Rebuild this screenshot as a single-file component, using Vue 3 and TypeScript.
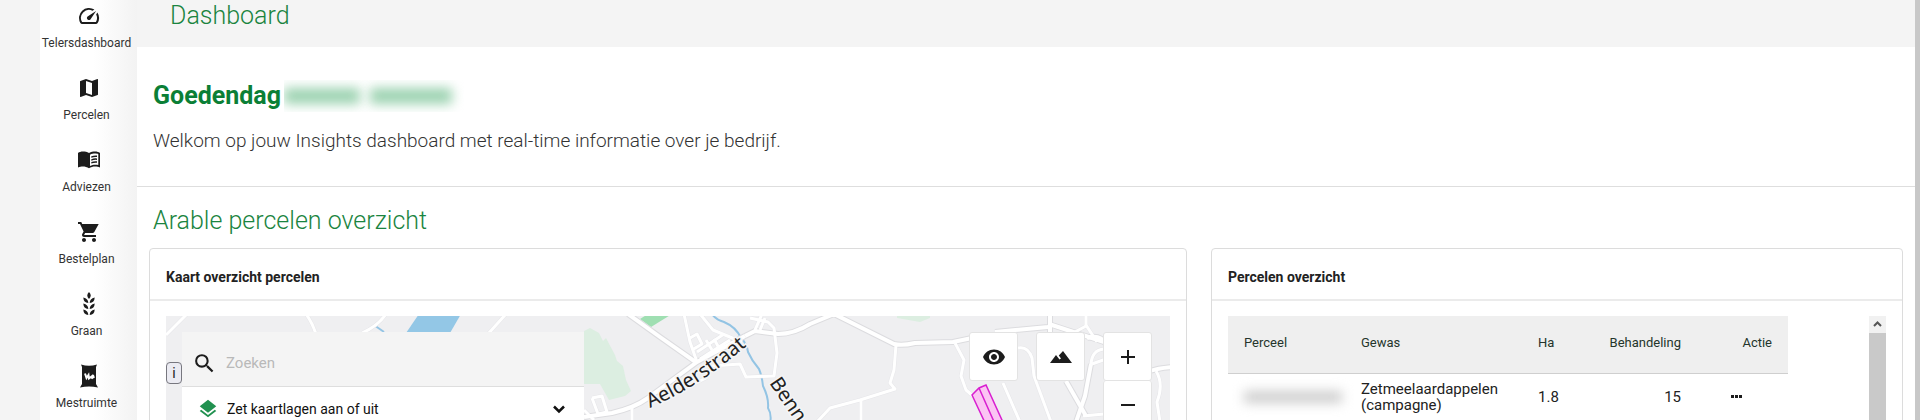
<script setup lang="ts">
import { ref } from 'vue'

type IconName = 'gauge' | 'map' | 'book' | 'cart' | 'grain' | 'bag'

interface NavItem {
  label: string
  icon: IconName
}

interface Parcel {
  crop: string
  hectares: string
  treatment: number
}

const navItems: NavItem[] = [
  { label: 'Telersdashboard', icon: 'gauge' },
  { label: 'Percelen', icon: 'map' },
  { label: 'Adviezen', icon: 'book' },
  { label: 'Bestelplan', icon: 'cart' },
  { label: 'Graan', icon: 'grain' },
  { label: 'Mestruimte', icon: 'bag' },
]

const parcels: Parcel[] = [
  { crop: 'Zetmeelaardappelen (campagne)', hectares: '1.8', treatment: 15 },
]

const minorRoads: string[] = [
  'M166 335L187 314', 'M306 314Q312 322 316 334', 'M362 333Q378 326 386 314', 'M488 334L506 314',
  'M684 314L690 342L697 362', 'M700 314L713 330L742 342', 'M690 338L697 334L702 344L692 350',
  'M697 352L724 334', 'M700 359L730 340', 'M706 340L712 350', 'M714 339L719 348',
  'M755 330L762 314', 'M750 318L768 322L774 328L777 353L774 376L746 377L740 364L712 366L706 378L690 386',
  'M760 330L765 318',
  'M896 345L894 370L890 383L895 389L860 400L830 408L817 422', 'M861 400V422',
  'M632 408V422', 'M592 398L602 396L607 412L598 414L592 398', 'M584 410L594 420',
  'M955 343L964 360L961 376L966 390L973 396', 'M1003 383L1020 422',
  'M1018 348Q1028 346 1032 358L1034 376L1051 422', 'M1086 314V325L1097 342', 'M1075 332L1086 326',
  'M1104 349Q1092 350 1091 364', 'M1092 364L1106 359', 'M1083 416L1104 414',
  'M1156 371Q1164 384 1157 402L1160 422',
]

const mainRoads: string[] = [
  'M628 314L660 337L697 363', 'M584 417L612 413Q634 408 648 398L697 362L745 336',
  'M745 336L755 331L778 334Q794 334 810 324L834 314L868 331L894 344Q902 346 915 343L953 342L972 338',
  'M995 332L1048 327L1052 325L1104 342', 'M1050 314V332', 'M1066 381L1086 416',
  'M1087 338Q1100 334 1106 344', 'M1091 364L1085 396L1076 422', 'M1150 371Q1158 368 1172 367',
]

const search = ref('')
</script>

<template>
  <div class="app">
    <aside class="sidebar">
      <nav class="nav">
        <a v-for="item in navItems" :key="item.label" class="nav-item" href="#">
          <svg class="nav-icon" viewBox="0 0 24 24" aria-hidden="true">
            <g v-if="item.icon === 'gauge'">
              <path d="m20.38 8.57-1.23 1.85a8 8 0 0 1-.22 7.58H5.07A8 8 0 0 1 15.58 6.85l1.85-1.23A10 10 0 0 0 3.35 19a2 2 0 0 0 1.72 1h13.85a2 2 0 0 0 1.74-1 10 10 0 0 0-.27-10.44zm-9.79 6.84a2 2 0 0 0 2.83 0l5.66-8.49-8.49 5.66a2 2 0 0 0 0 2.83z" />
            </g>
            <g v-else-if="item.icon === 'map'">
              <path d="m20.5 3-.16.03L15 5.1 9 3 3.36 4.9c-.21.07-.36.25-.36.48V20.5c0 .28.22.5.5.5l.16-.03L9 18.9l6 2.1 5.64-1.9c.21-.07.36-.25.36-.48V3.5c0-.28-.22-.5-.5-.5zM15 19l-6-2.11V5l6 2.11V19z" />
            </g>
            <g v-else-if="item.icon === 'book'">
              <path fill-rule="evenodd" d="M12 5C10 3.800 8 3.500 6 3.500S2.200 4 1 5V19.600C2.500 18.700 4.300 18.500 6 18.500S10.300 19 12 20.200C13.700 19 16 18.500 18 18.500S21.500 18.700 23 19.600V5C21.800 4 20 3.500 18 3.500S14 3.800 12 5ZM13 6.700C14.500 5.700 16.500 5.500 18 5.500S20.300 5.700 21.300 6V17C18.500 16.300 15.500 16.600 13 18Z" />
              <path d="M14.300 8.300Q17 7.200 20 7.500V9Q17 8.700 14.300 9.800ZM14.300 11.200Q17 10.100 20 10.400V11.900Q17 11.600 14.300 12.700ZM14.300 14.100Q17 13 20 13.300V14.800Q17 14.500 14.300 15.600Z" />
            </g>
            <g v-else-if="item.icon === 'cart'">
              <path d="M7 18c-1.100 0-1.990.9-1.990 2S5.900 22 7 22s2-.9 2-2-.9-2-2-2zM1 2v2h2l3.600 7.590-1.350 2.450c-.16.28-.25.610-.25.960 0 1.100.9 2 2 2h12v-2H7.420c-.14 0-.25-.11-.25-.25l.03-.12.9-1.630h7.450c.75 0 1.410-.41 1.750-1.030L21.700 4H5.210L4.270 2H1zm16 16c-1.100 0-1.990.9-1.990 2s.89 2 1.990 2 2-.9 2-2-.9-2-2-2z" />
            </g>
            <g v-else-if="item.icon === 'grain'">
              <path d="M12 0Q15.500 3.500 12 7Q8.500 3.500 12 0ZM11.300 11Q6.500 10.500 6.300 5.500Q11.300 6.500 11.300 11ZM12.700 11Q17.500 10.500 17.700 5.500Q12.700 6.500 12.700 11ZM11.300 17Q6.500 16.500 6.300 11.500Q11.300 12.500 11.300 17ZM12.700 17Q17.500 16.500 17.700 11.500Q12.700 12.500 12.700 17ZM11.300 23Q6.500 22.500 6.300 17.500Q11.300 18.500 11.300 23ZM12.700 23Q17.500 22.500 17.700 17.500Q12.700 18.500 12.700 23Z" />
            </g>
            <g v-else>
              <path d="M4 .5Q12 3 20 .5L19 3V20L21 23.500Q12 21.500 3 23.500L5 20V3Z" />
              <path class="bag-mark" d="M8 9.500L9.500 14L11.500 11L12 14.500L16.500 11L14.500 14.500L17.500 12.500" />
            </g>
          </svg>
          <span>{{ item.label }}</span>
        </a>
      </nav>
    </aside>

    <main class="main">
      <header class="topbar"><h1>Dashboard</h1></header>

      <section class="welcome">
        <h2 class="greeting">
          Goedendag
          <span class="hidden-name" aria-hidden="true"><i class="first"></i><i class="last"></i></span>
        </h2>
        <p>Welkom op jouw Insights dashboard met real-time informatie over je bedrijf.</p>
      </section>

      <section class="overview">
        <h2 class="overview-title">Arable percelen overzicht</h2>
        <div class="cards">
          <article class="card">
            <h3>Kaart overzicht percelen</h3>
            <div class="card-body">
              <div class="map">
                <svg class="map-canvas" viewBox="166 316 1004 480" preserveAspectRatio="xMinYMin slice" aria-hidden="true">
                  <path class="forest" d="M584 331L590 328L599 333L603 341L606 338L615 355L617 361L623 366L626 380L631 391L625 396L609 400L600 384L584 384Z" />
                  <path class="meadow" d="M640 319L648 314H672L651 327Z" />
                  <path class="forest" d="M897 314H930V318L920 322L897 318Z" />
                  <path class="lake" d="M419 314H461L450 333H406Z" />
                  <path class="stream" d="M374 325L384 332" />
                  <path class="stream" d="M712 314Q716 320 724 322Q736 327 741 338Q747 344 748 352Q752 361 759 369Q762 376 763 386Q769 398 768 408Q772 414 770 424" />
                  <path v-for="d in minorRoads" :key="'c' + d" class="casing" :d="d" />
                  <path v-for="d in mainRoads" :key="'d' + d" class="casing wide" :d="d" />
                  <path v-for="d in minorRoads" :key="d" class="road" :d="d" />
                  <path v-for="d in mainRoads" :key="d" class="road wide" :d="d" />
                  <path class="parcel" d="M972 395L979 388L986 385L1012 442L994 442ZM979 388L1003 442" />
                  <path id="street-a" class="guide" d="M650 408Q708 383 768 327" />
                  <path id="street-b" class="guide" d="M769 383L830 472" />
                  <text class="street"><textPath href="#street-a">Aelderstraat</textPath></text>
                  <text class="street"><textPath href="#street-b">Benn</textPath></text>
                </svg>

                <button class="info" type="button" aria-label="Kaartinformatie">i</button>

                <div class="layers">
                  <label class="search">
                    <svg viewBox="0 0 24 24" aria-hidden="true"><path d="M15.500 14h-.79l-.28-.27A6.470 6.470 0 0 0 16 9.500 6.500 6.500 0 1 0 9.500 16c1.610 0 3.090-.59 4.230-1.570l.27.280v.79l5 4.990L20.490 19l-4.990-5zm-6 0C7.010 14 5 11.990 5 9.500S7.010 5 9.500 5 14 7.010 14 9.500 11.990 14 9.500 14z" /></svg>
                    <input v-model="search" type="text" placeholder="Zoeken" aria-label="Zoeken" />
                  </label>
                  <button class="layer-toggle" type="button">
                    <svg class="layer-icon" viewBox="0 0 24 24" aria-hidden="true"><path d="m11.990 18.540-7.370-5.730L3 14.070l9 7 9-7-1.630-1.270-7.380 5.740zM12 16l7.360-5.730L21 9l-9-7-9 7 1.630 1.270L12 16z" /></svg>
                    <span>Zet kaartlagen aan of uit</span>
                    <svg class="chevron" viewBox="0 0 24 24" aria-hidden="true"><path d="M6 9L12 15L18 9" /></svg>
                  </button>
                </div>

                <div class="map-tools">
                  <button type="button" aria-label="Zichtbaarheid">
                    <svg viewBox="0 0 24 24" aria-hidden="true"><path d="M12 4.500C7 4.500 2.730 7.610 1 12c1.730 4.390 6 7.500 11 7.500s9.270-3.110 11-7.500c-1.730-4.390-6-7.500-11-7.500zM12 17c-2.760 0-5-2.240-5-5s2.240-5 5-5 5 2.240 5 5-2.240 5-5 5zm0-8c-1.660 0-3 1.340-3 3s1.340 3 3 3 3-1.340 3-3-1.340-3-3-3z" /></svg>
                  </button>
                  <button type="button" aria-label="Terrein">
                    <svg viewBox="0 0 24 24" aria-hidden="true"><path d="M1 18L7 10L10.500 14.500L12 13.500L9.800 10.500L14 6L23 18Z" /></svg>
                  </button>
                  <div class="zoom">
                    <button type="button" aria-label="Inzoomen">
                      <svg viewBox="0 0 24 24" aria-hidden="true"><path d="M11 5H13V11H19V13H13V19H11V13H5V11H11Z" /></svg>
                    </button>
                    <button type="button" aria-label="Uitzoomen">
                      <svg viewBox="0 0 24 24" aria-hidden="true"><path d="M5 11H19V13H5Z" /></svg>
                    </button>
                  </div>
                </div>
              </div>
            </div>
          </article>

          <article class="card">
            <h3>Percelen overzicht</h3>
            <div class="card-body list">
              <div class="table-area">
                <table>
                  <thead>
                    <tr>
                      <th class="col-name">Perceel</th>
                      <th class="col-crop">Gewas</th>
                      <th class="col-ha">Ha</th>
                      <th class="col-treat">Behandeling</th>
                      <th class="col-action">Actie</th>
                    </tr>
                  </thead>
                  <tbody>
                    <tr v-for="parcel in parcels" :key="parcel.crop">
                      <td><span class="hidden-parcel" aria-hidden="true"></span></td>
                      <td>{{ parcel.crop }}</td>
                      <td>{{ parcel.hectares }}</td>
                      <td class="col-treat">{{ parcel.treatment }}</td>
                      <td>
                        <button class="more" type="button" aria-label="Acties">
                          <svg viewBox="0 0 12 4" aria-hidden="true"><path d="M0 0H3V3H0ZM4 0H7V3H4ZM8 0H11V3H8Z" /></svg>
                        </button>
                      </td>
                    </tr>
                  </tbody>
                </table>
              </div>
              <div class="scroll-track" aria-hidden="true">
                <svg viewBox="0 0 17 17"><path d="M5 10L8.500 6.500L12 10" /></svg>
                <div class="scroll-thumb"></div>
              </div>
            </div>
          </article>
        </div>
      </section>
    </main>
    <div class="page-scroll" aria-hidden="true"></div>
  </div>
</template>

<style>
body {
  overflow: hidden;
}
</style>

<style scoped>
.app {
  display: flex;
  height: 100vh;
  overflow: hidden;
  box-sizing: border-box;
  padding-left: 40px;
  background: #f4f4f4;
  color: #222;
  font-family: Roboto, "Liberation Sans", sans-serif;
}
.app * {
  box-sizing: border-box;
}
h1, h2, h3, p {
  margin: 0;
}
button, input {
  font: inherit;
  color: inherit;
}
button {
  padding: 0;
  border: 0;
  background: none;
  cursor: pointer;
}
svg {
  display: block;
}
.sidebar {
  flex: 0 0 97px;
  min-width: 0;
  background: linear-gradient(to right, #fff 55%, #f3f3f3);
}
.nav {
  display: flex;
  flex-direction: column;
  padding-top: 4px;
}
.nav-item {
  display: flex;
  flex-direction: column;
  align-items: center;
  gap: 7px;
  height: 72px;
  padding-right: 4px;
  color: #333;
  font-size: 12px;
  line-height: 16px;
  text-decoration: none;
}
.nav-icon {
  width: 24px;
  height: 24px;
  margin-left: 4px;
  fill: #1c1c1c;
}
.bag-mark {
  fill: none;
  stroke: #fff;
  stroke-width: 2;
}
.main {
  flex: 1;
  min-width: 0;
  background: #fff;
}
.topbar {
  height: 47px;
  padding-left: 33px;
  background: #f4f4f4;
}
.topbar h1, .overview-title {
  color: #1a8440;
  font-size: 25px;
  font-weight: 300;
  line-height: 32px;
}
.welcome {
  padding: 33px 16px 31px;
  border-bottom: 1px solid #dedede;
  color: #333;
}
.greeting {
  display: flex;
  align-items: center;
  gap: 3px;
  color: #0b7f36;
  font-size: 25px;
  font-weight: 700;
  line-height: 32px;
}
.hidden-name {
  display: flex;
  gap: 10px;
  width: 180px;
  height: 32px;
  padding: 8px 0;
  overflow: hidden;
}
.hidden-name i {
  background: #9bd2b0;
  filter: blur(6px);
}
.first {
  width: 76px;
}
.last {
  width: 82px;
}
.welcome p {
  padding-top: 15px;
  font-size: 19px;
  font-weight: 300;
  line-height: 28px;
}
.overview {
  padding: 18px 12px 0;
}
.overview-title {
  padding: 0 4px 11px;
}
.cards {
  display: grid;
  grid-template-columns: 3fr 2fr;
  gap: 24px;
}
.card {
  min-width: 0;
  border: 1px solid #dcdcdc;
  border-radius: 4px;
}
.card h3 {
  padding: 18px 16px 12px;
  border-bottom: 2px solid #ebebeb;
  font-size: 14px;
  font-weight: 700;
  line-height: 20px;
}
.card-body {
  padding: 15px 16px 16px;
}
.map {
  position: relative;
  display: flex;
  align-items: flex-start;
  justify-content: space-between;
  height: 480px;
  padding: 16px 18px 16px 16px;
  overflow: hidden;
  background: #efeff1;
}
.map-canvas {
  position: absolute;
  inset: 0;
  width: 100%;
  height: 100%;
}
.forest {
  fill: #dceee1;
}
.meadow {
  fill: #9fdfb2;
}
.lake {
  fill: #93c7e6;
}
.stream, .road, .casing, .guide {
  fill: none;
}
.stream {
  stroke: #93c4e4;
  stroke-width: 2;
}
.road, .casing {
  stroke-linejoin: round;
}
.casing {
  stroke: #e6e6e9;
  stroke-width: 4;
}
.casing.wide {
  stroke: #dcdcdf;
  stroke-width: 6;
}
.road {
  stroke: #fff;
  stroke-width: 3;
}
.road.wide {
  stroke-width: 4;
}
.parcel {
  fill: #fbc4f3;
  stroke: #d81fd0;
  stroke-width: 1.500;
}
.street {
  fill: #222;
  stroke: #f5f5f6;
  stroke-width: 3;
  paint-order: stroke;
  font-family: "Noto Sans", sans-serif;
  font-size: 20px;
}
.info {
  position: absolute;
  top: 46px;
  left: 0;
  width: 16px;
  height: 22px;
  border: 1px solid #77777f;
  border-radius: 4px;
  background: #ebebf2;
  font-size: 14px;
  line-height: 16px;
}
.layers {
  position: relative;
  flex: 0 1 402px;
  background: #fff;
}
.search {
  display: flex;
  align-items: center;
  gap: 9px;
  height: 55px;
  padding: 8px 10px 0;
  border-bottom: 1px solid #dedede;
  background: #f4f4f4;
}
.search svg {
  width: 25px;
  height: 25px;
  fill: #1c1c1c;
}
.search input {
  flex: 1;
  min-width: 0;
  padding: 0;
  border: 0;
  outline: 0;
  background: none;
  font-size: 15px;
}
.search input::placeholder {
  color: #b9b9b9;
}
.layer-toggle {
  display: flex;
  align-items: center;
  gap: 8px;
  width: 100%;
  height: 44px;
  padding: 0 15px;
  color: #111;
  font-size: 14px;
  text-align: left;
}
.layer-toggle span {
  flex: 1;
}
.layer-icon {
  width: 22px;
  height: 22px;
  fill: #219150;
}
.chevron {
  width: 20px;
  height: 20px;
  fill: none;
  stroke: #111;
  stroke-width: 3;
}
.map-tools {
  position: relative;
  display: flex;
  align-items: flex-start;
  gap: 18px;
}
.map-tools button {
  display: grid;
  place-items: center;
  width: 49px;
  height: 49px;
  border: 1px solid #e3e3e3;
  border-radius: 3px;
  background: #fff;
}
.map-tools svg {
  width: 24px;
  height: 24px;
  fill: #1c1c1c;
}
.zoom button + button {
  border-top: 0;
}
.list {
  display: flex;
  height: 511px;
}
.table-area {
  flex: 1;
  min-width: 0;
}
table {
  width: 560px;
  max-width: 100%;
  border-collapse: collapse;
  table-layout: fixed;
}
th, td {
  padding: 0 16px;
  font-weight: 400;
  text-align: left;
}
th {
  height: 57px;
  padding-bottom: 3px;
  border-bottom: 1px solid #cfcfcf;
  background: #efefef;
  color: #24352b;
  font-size: 13px;
}
td {
  height: 48px;
  padding-right: 0;
  font-size: 15px;
  line-height: 16px;
}
.col-name {
  width: 117px;
}
.col-crop {
  width: 177px;
}
.col-ha {
  width: 70px;
}
.col-treat {
  width: 105px;
  padding-right: 16px;
  text-align: right;
}
.col-action {
  padding-left: 0;
  text-align: right;
}
.hidden-parcel {
  display: block;
  width: 98px;
  height: 12px;
  background: #cdcdcd;
  filter: blur(6px);
}
.more {
  display: grid;
  place-items: center;
  width: 48px;
  height: 32px;
}
.more svg {
  width: 12px;
  height: 4px;
  fill: #1c1c1c;
}
.scroll-track {
  display: flex;
  flex-direction: column;
  flex: 0 0 17px;
  background: #f1f1f1;
}
.scroll-track svg {
  width: 17px;
  height: 17px;
  fill: none;
  stroke: #555;
  stroke-width: 2;
}
.scroll-thumb {
  height: 240px;
  background: #c9c9c9;
}
.page-scroll {
  flex: 0 0 5px;
  background: #c8c8c8;
}
</style>
